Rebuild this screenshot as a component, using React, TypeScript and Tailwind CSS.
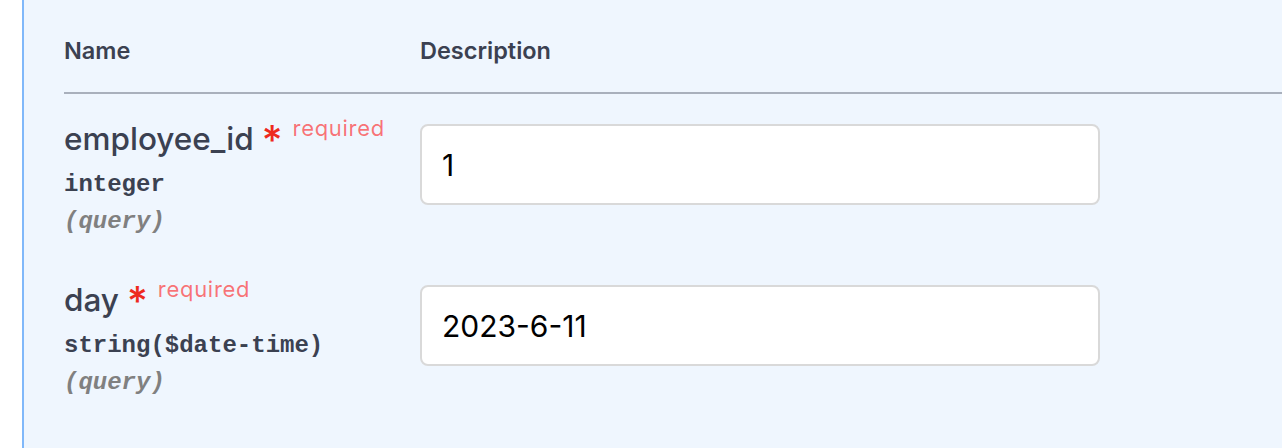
export default function App() {
  const params = [
    { name: "employee_id", type: "integer", value: "1" },
    { name: "day", type: "string($date-time)", value: "2023-6-11" },
  ];

  return (
    <div className="flex h-[448px] w-full bg-white text-[#3b4151] [font-family:Inter,'Noto_Sans',sans-serif]">
      <div className="w-[22px] shrink-0 bg-white" />
      <div className="flex-1 border-l-2 border-[#80b8fa] bg-[#eff6fe] pl-[40px]">
        {/* table head */}
        <div className="flex h-[94px] border-b-2 border-[#a9b0bc] pt-[35px] text-[23.5px] font-semibold leading-[32px]">
          <div className="w-[356px]">Name</div>
          <div>Description</div>
        </div>

        {params.map((p) => (
          <div key={p.name} className="flex pb-[17px] pt-[22px]">
            <div className="w-[356px] shrink-0">
              <div className="flex h-[40px] items-baseline text-[31.5px] font-medium leading-[40px]">
                <span>{p.name}</span>
                <span className="relative top-[4px] ml-[8px] text-[40px] leading-[40px] text-[#ee2a1e]">*</span>
                <span className="relative top-[-14px] ml-[10px] text-[22px] font-normal tracking-[0.7px] text-[rgba(255,0,0,0.55)]">
                  required
                </span>
              </div>
              <div className="mt-[13px] text-[24px] font-bold leading-[32px] [font-family:'Liberation_Mono',monospace]">
                {p.type}
              </div>
              <div className="mt-[5px] text-[24px] font-bold italic leading-[32px] text-[#808080] [font-family:'Liberation_Mono',monospace]">
                (query)
              </div>
            </div>
            <div className="mt-[8px]">
              <input
                readOnly
                value={p.value}
                className="h-[81px] w-[680px] rounded-[8px] border-2 border-[#d9d9d9] bg-white px-[20px] text-[30px] text-black outline-none [font-family:Inter,sans-serif]"
              />
            </div>
          </div>
        ))}
      </div>
    </div>
  );
}
